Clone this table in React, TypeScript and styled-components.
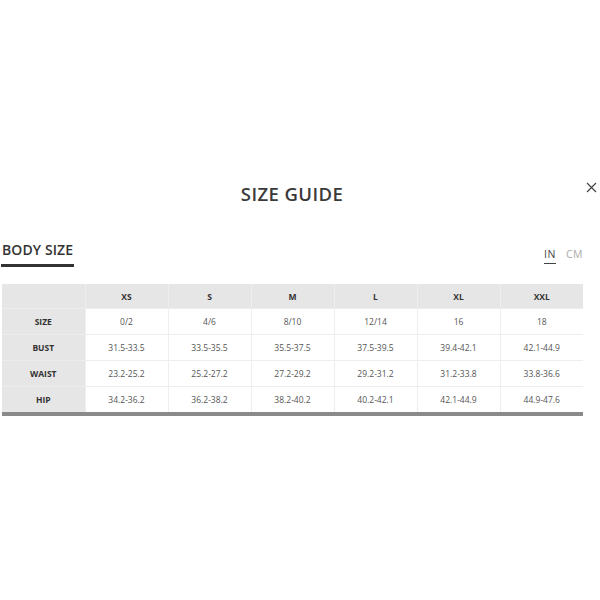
import React from "react";
import styled, { createGlobalStyle } from "styled-components";

const Global = createGlobalStyle`
  html, body { margin: 0; padding: 0; background: #fff; }
  body { font-family: "Open Sans", "Liberation Sans", sans-serif; color: #333; }
`;

const Page = styled.div`
  width: 600px;
  height: 600px;
  box-sizing: border-box;
  padding-top: 178px;
  position: relative;
`;

const TitleBar = styled.div`
  position: relative;
  height: 30px;
  display: flex;
  justify-content: center;
  align-items: center;
  padding-right: 16px;
`;

const Title = styled.h1`
  margin: 0;
  font-size: 18.5px;
  font-weight: 600;
  letter-spacing: 0.4px;
  color: #3a3a3a;
`;

const Close = styled.button`
  position: absolute;
  right: 2px;
  top: 2px;
  width: 14px;
  height: 14px;
  padding: 0;
  border: 0;
  background: none;
  display: flex;
  align-items: center;
  justify-content: center;
`;

const TabRow = styled.div`
  margin-top: 32px;
  display: flex;
  justify-content: space-between;
  align-items: flex-end;
  padding: 0 17px 0 1px;
`;

const Tab = styled.div`
  font-size: 14px;
  font-weight: 600;
  color: #333;
  padding: 0 1px 5px 1px;
  border-bottom: 3px solid #333;
  letter-spacing: 0.1px;
`;

const Units = styled.div`
  display: flex;
  gap: 10px;
  padding-bottom: 3px;
`;

const Unit = styled.span<{ $active?: boolean }>`
  font-size: 10.5px;
  color: ${(p) => (p.$active ? "#444" : "#aaa")};
  letter-spacing: 0.5px;
  padding-bottom: 2px;
  border-bottom: ${(p) => (p.$active ? "1.5px solid #444" : "1.5px solid transparent")};
`;

const TableWrap = styled.div`
  margin: 17px 17px 0 2px;
  border-bottom: 4px solid #8a8a8a;
`;

const Table = styled.table`
  width: 100%;
  border-collapse: collapse;
  table-layout: fixed;
  font-size: 8.5px;
`;

const Th = styled.th`
  background: #e6e6e6;
  height: 24px;
  font-weight: 700;
  color: #333;
  text-align: center;
  border-left: 1px solid #eeeeee;
  padding: 0;
`;

const RowHead = styled.th`
  background: #e6e6e6;
  height: 25px;
  font-weight: 700;
  color: #333;
  text-align: center;
  padding: 0;
  border-top: 1px solid #ececec;
`;

const Td = styled.td`
  height: 25px;
  text-align: center;
  color: #555;
  padding: 0;
  border-left: 1px solid #eeeeee;
  border-top: 1px solid #eeeeee;
`;

const sizes = ["XS", "S", "M", "L", "XL", "XXL"];
const rows: [string, string[]][] = [
  ["SIZE", ["0/2", "4/6", "8/10", "12/14", "16", "18"]],
  ["BUST", ["31.5-33.5", "33.5-35.5", "35.5-37.5", "37.5-39.5", "39.4-42.1", "42.1-44.9"]],
  ["WAIST", ["23.2-25.2", "25.2-27.2", "27.2-29.2", "29.2-31.2", "31.2-33.8", "33.8-36.6"]],
  ["HIP", ["34.2-36.2", "36.2-38.2", "38.2-40.2", "40.2-42.1", "42.1-44.9", "44.9-47.6"]],
];

export default function App() {
  return (
    <>
      <Global />
      <Page>
        <TitleBar>
          <Title>SIZE GUIDE</Title>
          <Close aria-label="close">
            <svg width="11" height="11" viewBox="0 0 11 11">
              <path d="M1 1 L10 10 M10 1 L1 10" stroke="#444" strokeWidth="1.2" fill="none" />
            </svg>
          </Close>
        </TitleBar>
        <TabRow>
          <Tab>BODY SIZE</Tab>
          <Units>
            <Unit $active>IN</Unit>
            <Unit>CM</Unit>
          </Units>
        </TabRow>
        <TableWrap>
          <Table>
            <thead>
              <tr>
                <Th style={{ borderLeft: 0 }}></Th>
                {sizes.map((s) => (
                  <Th key={s}>{s}</Th>
                ))}
              </tr>
            </thead>
            <tbody>
              {rows.map(([label, vals]) => (
                <tr key={label}>
                  <RowHead>{label}</RowHead>
                  {vals.map((v, i) => (
                    <Td key={i}>{v}</Td>
                  ))}
                </tr>
              ))}
            </tbody>
          </Table>
        </TableWrap>
      </Page>
    </>
  );
}
